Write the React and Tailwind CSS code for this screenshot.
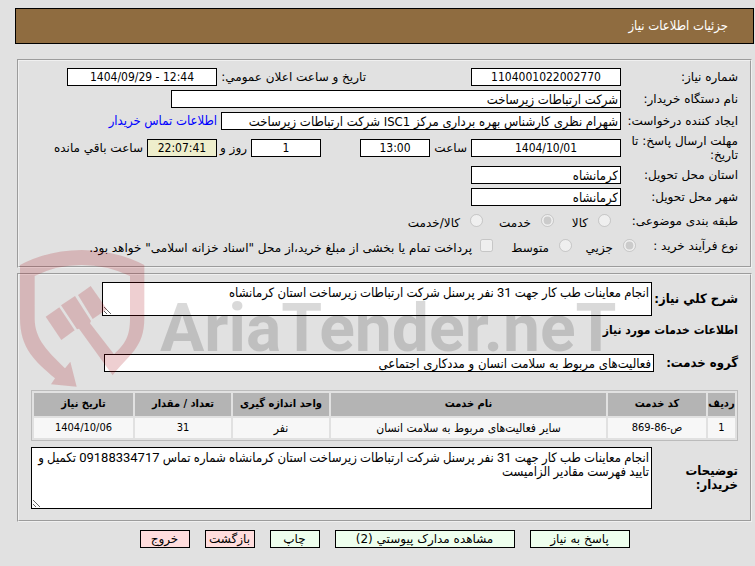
import React from "react";

const fontWide = "font-['DejaVu_Sans',sans-serif] text-[12px]";
const fontNarrow = "font-['DejaVu_Sans_Condensed','DejaVu_Sans',sans-serif]";
const areaClass =
  "resize border border-black bg-white px-[2px] pt-[3px] pb-0 font-['Roboto','DejaVu_Sans_Condensed',sans-serif] text-[13px] leading-[14px]";

const Field = ({ id, value, className, label, numeric = false }) => (
  <input
    id={id}
    type="text"
    readOnly
    defaultValue={value}
    aria-label={label}
    className={`h-[18px] min-w-0 shrink-0 border border-black leading-4 text-black outline-none ${fontNarrow} ${
      numeric ? "text-center text-[12px]" : "px-[2px] text-[13px]"
    } ${className}`}
  />
);

const Row = ({ label, id, className = "h-[22px]", children }) => (
  <div className={`flex items-center ${className}`}>
    <label htmlFor={id} className="w-[117px] shrink-0 leading-[14px]">
      {label}
    </label>
    {children}
  </div>
);

const columns = [
  { title: "ردیف", width: "w-[27px]", cell: "" },
  { title: "کد خدمت", width: "w-[98px]", cell: "" },
  { title: "نام خدمت", width: "", cell: "text-[12px]" },
  { title: "واحد اندازه گیری", width: "w-[96px]", cell: "text-[12px]" },
  { title: "تعداد / مقدار", width: "w-[96px]", cell: "" },
  { title: "تاریخ نیاز", width: "w-[99px]", cell: "" },
];

const services = [
  ["1", "ص-86-869", "سایر فعالیت‌های مربوط به سلامت انسان", "نفر", "31", "1404/10/06"],
];

const actions = [
  { title: "پاسخ به نیاز", className: "w-[100px] bg-[#eeffee]" },
  { title: "مشاهده مدارک پیوستي (2)", className: "w-[180px] bg-[#eeffee]" },
  { title: "چاپ", className: "w-[50px] bg-[#eeffee]" },
  { title: "بازگشت", className: "w-[50px] bg-[#ffdddd]" },
  { title: "خروج", className: "w-[50px] bg-[#ffdddd]" },
];

const panelClass = "border-2 border-[#f0f0f0] [border-style:groove]";

// Site mark laid over the whole form
const Watermark = () => (
  <div
    dir="ltr"
    aria-hidden="true"
    className="pointer-events-none absolute top-[250px] left-5 flex gap-[14px]"
  >
    <svg width="126" height="138" viewBox="30 30 378 414" className="shrink-0">
      <g fill="#a5000a" fillOpacity="0.19">
        <path d="M30 75Q115 30 215 30T403 75V235C403 325 355 345 308 406L207 266L201 268L153 196L195 168L243 243L240 250L312 343C345 312 360 290 360 235V108Q290 75 215 75T74 108V235C74 300 115 335 165 385L181 365L200 440L123 433L135 415C75 365 30 325 30 235Z" />
        <path d="M107 230L148 202L194 271L154 300Z" />
        <path d="M204 165L242 138L291 208L248 237Z" />
      </g>
    </svg>
    <span className="mt-[46px] font-['Roboto',sans-serif] text-[66px] leading-[66px] font-bold text-black/15">
      AriaTender.neT
    </span>
  </div>
);

const App = () => {
  return (
    <div
      dir="rtl"
      className={`relative min-h-screen bg-[#e1e1e1] pt-2 pr-px pl-[15px] text-black ${fontWide}`}
    >
      <header className="flex h-9 items-center border border-black bg-[#8f6c40] pr-[25px] text-white">
        <h1 className={`text-[13px] ${fontNarrow}`}>جزئیات اطلاعات نیاز</h1>
      </header>

      <div className="mx-[2px] mt-[15px] flex flex-col gap-[5px]">
        <fieldset className={`${panelClass} h-[209px] min-w-0 pt-[5px] pr-3`}>
          <Row label="شماره نیاز:" id="need-number">
            <Field id="need-number" numeric value="1104001022002770" className="w-[150px] bg-white" />
            <label htmlFor="announce" className="mr-[105px] w-[149px] shrink-0 whitespace-nowrap">
              تاریخ و ساعت اعلان عمومي:
            </label>
            <Field
              id="announce"
              numeric
              value="1404/09/29 - 12:44"
              className="w-[150px] bg-white [direction:ltr]"
            />
          </Row>
          <Row label="نام دستگاه خریدار:" id="agency">
            <Field id="agency" value="شرکت ارتباطات زیرساخت" className="w-[450px] bg-white" />
          </Row>
          <Row label="ایجاد کننده درخواست:" id="creator">
            <Field
              id="creator"
              value="شهرام نظری کارشناس بهره برداری مرکز ISC1 شرکت ارتباطات زیرساخت"
              className="w-[400px] bg-white"
            />
            <a
              href="#contact"
              className={`mr-1 text-[13px] whitespace-nowrap text-[#0000ff] ${fontNarrow}`}
            >
              اطلاعات تماس خریدار
            </a>
          </Row>
          <Row label="مهلت ارسال پاسخ: تا تاریخ:" id="deadline" className="h-8">
            <Field id="deadline" numeric value="1404/10/01" className="w-[150px] bg-white" />
            <label htmlFor="hour" className="mr-1 w-[37px] shrink-0">ساعت</label>
            <Field id="hour" numeric value="13:00" className="w-[70px] bg-white" />
            <Field id="days" numeric value="1" className="mr-[39px] w-[70px] bg-white" />
            <label htmlFor="days" className="mr-1 w-[30px] shrink-0 whitespace-nowrap">روز و</label>
            <Field id="remaining" numeric value="22:07:41" className="w-[70px] bg-[#eeeecc]" />
            <label htmlFor="remaining" className="mr-1 whitespace-nowrap">ساعت باقي مانده</label>
          </Row>
          <Row label="استان محل تحویل:" id="province">
            <Field id="province" value="کرمانشاه" className="w-[150px] bg-white" />
          </Row>
          <Row label="شهر محل تحویل:" id="city">
            <Field id="city" value="کرمانشاه" className="w-[150px] bg-white" />
          </Row>
          <div
            role="radiogroup"
            aria-label="طبقه بندی موضوعی"
            className="flex h-[25px] items-center"
          >
            <span className="w-[127px] shrink-0">طبقه بندی موضوعی:</span>
            <input type="radio" id="goods" name="subject" disabled />
            <label htmlFor="goods" className="mr-[10px] w-[34px] pt-1">کالا</label>
            <input type="radio" id="service" name="subject" disabled defaultChecked />
            <label htmlFor="service" className="mr-[10px] w-[48px] pt-1">خدمت</label>
            <input type="radio" id="both" name="subject" disabled />
            <label htmlFor="both" className="mr-[10px] pt-1">کالا/خدمت</label>
          </div>
          <div role="radiogroup" aria-label="نوع فرآیند خرید" className="flex h-[25px] items-center">
            <span className="w-[102px] shrink-0">نوع فرآیند خرید :</span>
            <input type="radio" id="minor" name="process" disabled defaultChecked />
            <label htmlFor="minor" className="mr-[10px] w-[41px] pt-1">جزیي</label>
            <input type="radio" id="medium" name="process" disabled />
            <label htmlFor="medium" className="mr-[10px] w-[56px] pt-1">متوسط</label>
            <input type="checkbox" id="treasury" disabled />
            <label htmlFor="treasury" className="mr-2 pt-1 whitespace-nowrap">
              پرداخت تمام یا بخشی از مبلغ خرید،از محل "اسناد خزانه اسلامی" خواهد بود.
            </label>
          </div>
        </fieldset>

        <fieldset className={`${panelClass} ${fontNarrow} h-[249px] min-w-0 pt-[7px] pr-3 pl-3`}>
          <div className="flex items-center">
            <label htmlFor="summary" className="w-[86px] shrink-0 text-[13px] font-bold whitespace-nowrap">
              شرح کلي نیاز:
            </label>
            <textarea
              id="summary"
              readOnly
              defaultValue="انجام معاینات طب کار جهت 31 نفر پرسنل شرکت ارتباطات زیرساخت استان کرمانشاه"
              className={`h-[34px] w-[550px] ${areaClass}`}
            />
          </div>
          <h2 className="mt-[6px] leading-4 font-bold">اطلاعات خدمات مورد نیاز</h2>
          <div className="mt-4 flex items-center">
            <label htmlFor="group" className="w-[84px] shrink-0 text-[13px] leading-[18px] font-bold">
              گروه خدمت:
            </label>
            <Field
              id="group"
              value="فعالیت‌های مربوط به سلامت انسان و مددکاری اجتماعی"
              className="w-[550px] bg-white"
            />
          </div>

          <table className="mt-[18px] w-full table-fixed border-separate border-spacing-[2px] border border-[#bbbbbb] text-center text-[11px]">
            <thead>
              <tr className="h-[23px] bg-[#b4b4b4]">
                {columns.map((col) => (
                  <th key={col.title} className={`${col.width} p-0 font-bold whitespace-nowrap`}>
                    {col.title}
                  </th>
                ))}
              </tr>
            </thead>
            <tbody>
              {services.map((row) => (
                <tr key={row[0]} className="h-5 bg-[#f7f7f7]">
                  {row.map((cell, i) => (
                    <td key={i} className={`p-0 leading-4 ${columns[i].cell}`}>{cell}</td>
                  ))}
                </tr>
              ))}
            </tbody>
          </table>

          <div className="mt-[6px] flex items-center">
            <label
              htmlFor="notes"
              className="w-[86px] shrink-0 pl-5 text-[13px] leading-[14px] font-bold"
            >
              توضیحات خریدار:
            </label>
            <textarea
              id="notes"
              readOnly
              defaultValue="انجام معاینات طب کار جهت 31 نفر پرسنل شرکت ارتباطات زیرساخت استان کرمانشاه شماره تماس 09188334717 تکمیل و تایید فهرست مقادیر الزامیست"
              className={`h-[62px] min-w-0 flex-1 ${areaClass}`}
            />
          </div>
        </fieldset>
      </div>

      <div className="mt-2 flex justify-center gap-[15px]">
        {actions.map((action) => (
          <button
            key={action.title}
            type="button"
            className={`h-[18px] border border-black leading-4 whitespace-nowrap ${action.className}`}
          >
            {action.title}
          </button>
        ))}
      </div>

      <Watermark />
    </div>
  );
};

export default App;
